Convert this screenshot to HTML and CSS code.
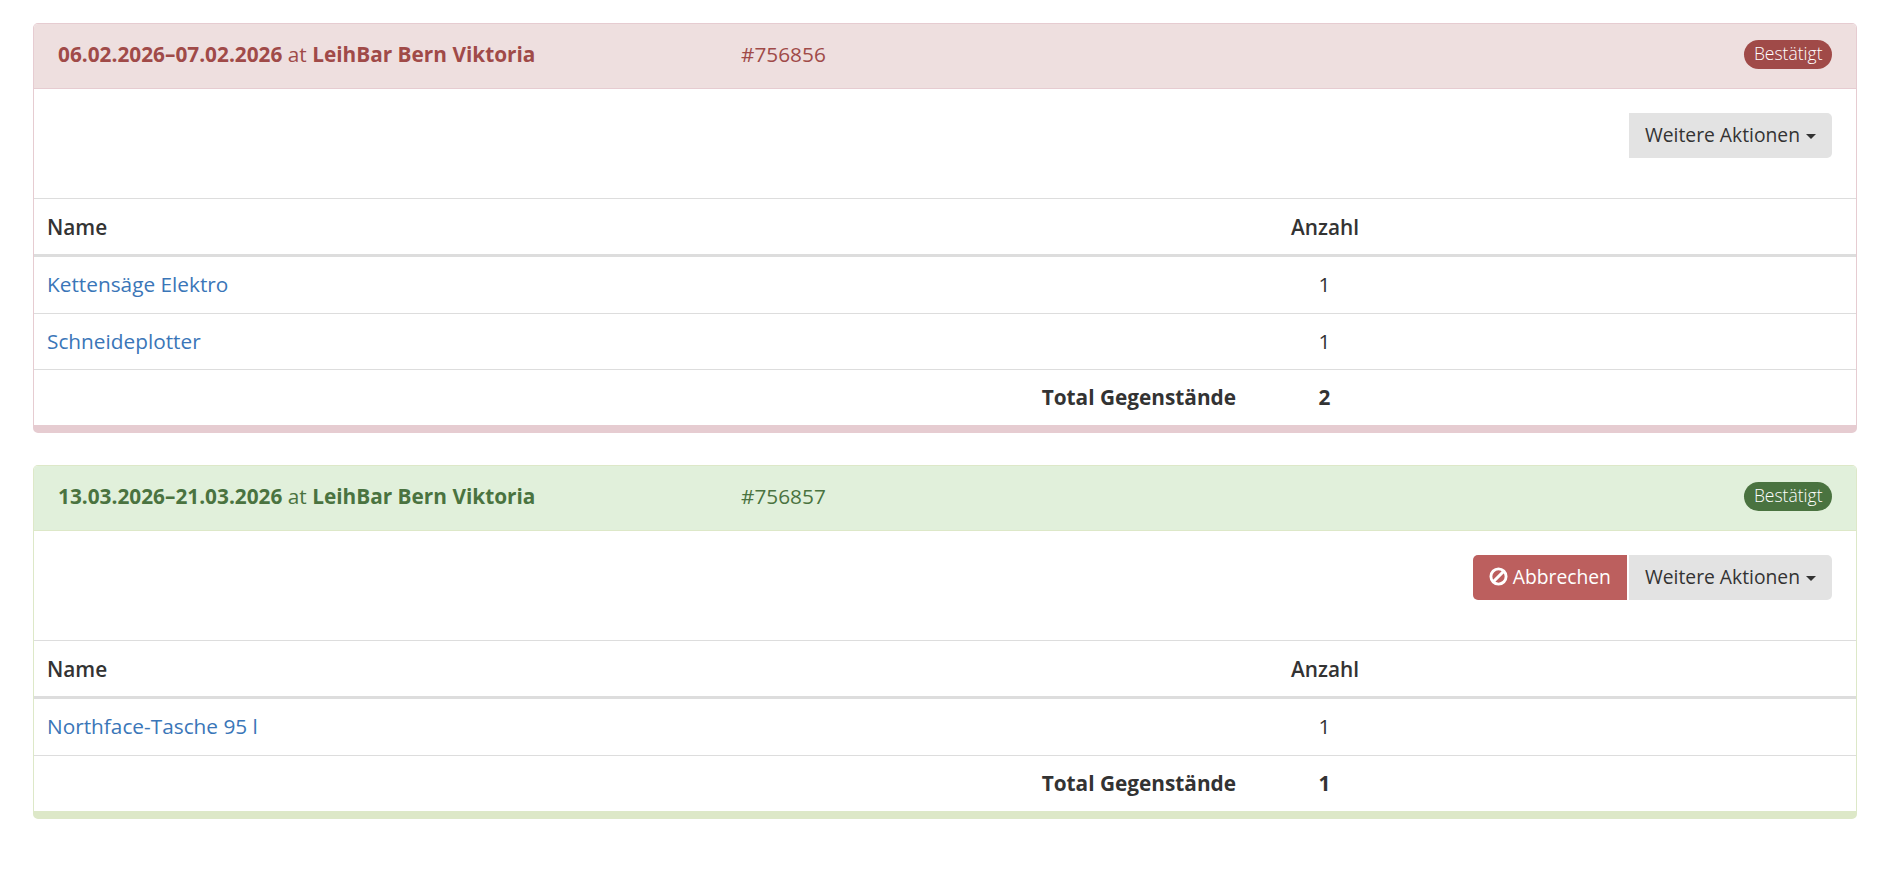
FILE: index.html
```html
<!DOCTYPE html>
<html lang="de">
<head>
    <meta charset="UTF-8">
    <meta name="viewport" content="width=device-width, initial-scale=1.0">
    <title>Reservierungen</title>
    <link rel="stylesheet" href="styles.css">
</head>
<body>

    <div class="panel panel-red">
        <div class="panel-heading">
            <div class="heading-date"><b>06.02.2026–07.02.2026</b> at <b>LeihBar Bern Viktoria</b></div>
            <div class="heading-id">#756856</div>
            <span class="label">Bestätigt</span>
        </div>
        <div class="actions">
            <a class="btn btn-grey">Weitere Aktionen <span class="caret"></span></a>
        </div>
        <table>
            <colgroup>
                <col class="col-name">
                <col class="col-qty">
                <col>
            </colgroup>
            <tr class="head-row"><th>Name</th><th class="qty">Anzahl</th><th></th></tr>
            <tr><td><a href="#">Kettensäge Elektro</a></td><td class="qty">1</td><td></td></tr>
            <tr><td><a href="#">Schneideplotter</a></td><td class="qty">1</td><td></td></tr>
            <tr class="total-row"><td class="total-label">Total Gegenstände</td><td class="qty">2</td><td></td></tr>
        </table>
    </div>

    <div class="panel panel-green">
        <div class="panel-heading">
            <div class="heading-date"><b>13.03.2026–21.03.2026</b> at <b>LeihBar Bern Viktoria</b></div>
            <div class="heading-id">#756857</div>
            <span class="label">Bestätigt</span>
        </div>
        <div class="actions">
            <a class="btn btn-red">
                <svg class="ban-icon" viewBox="0 0 20 20"><circle cx="10" cy="10" r="8" fill="none" stroke="currentColor" stroke-width="3"/><path d="M4.6 15.4 15.4 4.6" stroke="currentColor" stroke-width="3"/></svg>
                Abbrechen
            </a>
            <a class="btn btn-grey">Weitere Aktionen <span class="caret"></span></a>
        </div>
        <table>
            <colgroup>
                <col class="col-name">
                <col class="col-qty">
                <col>
            </colgroup>
            <tr class="head-row"><th>Name</th><th class="qty">Anzahl</th><th></th></tr>
            <tr><td><a href="#">Northface-Tasche 95 l</a></td><td class="qty">1</td><td></td></tr>
            <tr class="total-row"><td class="total-label">Total Gegenstände</td><td class="qty">1</td><td></td></tr>
        </table>
    </div>

</body>
</html>
```
FILE: styles.css
```css
body {
    margin: 0;
    padding: 23px 33px 0;
    font-family: "Open Sans", sans-serif;
    font-size: 20.8px;
    color: #333;
    background-color: #fff;
}
.panel {
    margin-bottom: 32px;
    border: 1px solid;
    border-bottom-width: 8px;
    border-radius: 5px;
    overflow: hidden;
}
.panel-red {
    border-color: #e6ccd1;
}
.panel-green {
    border-color: #dde8c8;
}
.panel-heading {
    display: flex;
    align-items: center;
    height: 60px;
    padding: 0 24px 4px;
    border-bottom: 1px solid;
    border-color: inherit;
}
.panel-red .panel-heading {
    background-color: #eedfdf;
    color: #a04a48;
}
.panel-green .panel-heading {
    background-color: #e1f0db;
    color: #4a7340;
}
.heading-date {
    width: 683px;
}
.heading-date b {
    font-weight: 700;
}
.heading-id {
    flex: 1;
}
.label {
    height: 29px;
    line-height: 27px;
    padding: 0 9.5px;
    border-radius: 15px;
    font-size: 17.5px;
    font-weight: 300;
    color: #fff;
}
.panel-red .label {
    background-color: #a04a48;
}
.panel-green .label {
    background-color: #4a7340;
}
.actions {
    display: flex;
    justify-content: flex-end;
    gap: 2px;
    height: 109px;
    padding: 24px 24px 0;
    box-sizing: border-box;
}
.btn {
    display: flex;
    align-items: center;
    height: 45px;
    padding: 0 16px 2px;
    box-sizing: border-box;
    font-size: 19.3px;
}
.btn-grey {
    background-color: #e3e3e3;
    border-radius: 0 5px 5px 0;
}
.btn-red {
    background-color: #bc5f5e;
    color: #fff;
    border-radius: 5px 0 0 5px;
}
.ban-icon {
    width: 19px;
    height: 19px;
    margin-right: 5px;
}
.caret {
    width: 0;
    height: 0;
    margin-left: 6px;
    margin-top: 3px;
    border-top: 5.5px solid #333;
    border-left: 5.5px solid transparent;
    border-right: 5.5px solid transparent;
}
table {
    width: 100%;
    table-layout: fixed;
    border-collapse: separate;
    border-spacing: 0;
}
.col-name {
    width: 1244px;
}
.col-qty {
    width: 93px;
}
th, td {
    height: 56px;
    padding: 0 13px 1px;
    box-sizing: border-box;
    border-top: 1px solid #ddd;
    text-align: left;
    font-weight: 400;
}
th {
    height: 59px;
    padding-bottom: 0;
    font-weight: 600;
    border-bottom: 3px solid #ddd;
}
.head-row + tr td {
    padding-bottom: 3px;
    border-top: 0;
}
td a {
    color: #3a76b8;
    text-decoration: none;
}
.qty {
    text-align: center;
}
.total-row td {
    font-weight: 700;
}
td.total-label {
    padding-right: 42px;
    text-align: right;
}
```
